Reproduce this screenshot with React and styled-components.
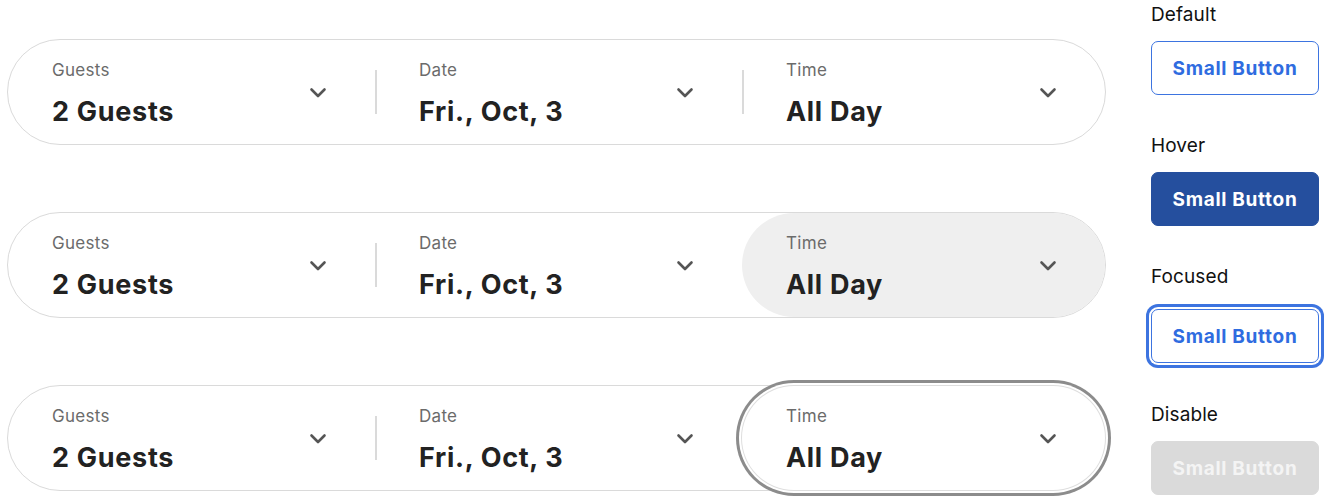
import React from 'react'
import styled, { createGlobalStyle, css } from 'styled-components'

const GlobalStyle = createGlobalStyle`
  html, body {
    margin: 0;
    padding: 0;
    background: #ffffff;
    font-family: Inter, "Noto Sans", sans-serif;
  }
`

const Page = styled.div`
  width: 1326px;
  height: 501px;
  overflow: hidden;
  box-sizing: border-box;
  padding: 0 7px;
  display: flex;
  align-items: flex-start;
  justify-content: space-between;
`

const Bars = styled.div`
  padding-top: 39px;
  display: flex;
  flex-direction: column;
  gap: 67px;
`

const Bar = styled.div`
  width: 1099px;
  height: 106px;
  box-sizing: border-box;
  border: 1.5px solid #dadada;
  border-radius: 53px;
  display: grid;
  grid-template-columns: 367px 367px 1fr;
  background: #fff;
`

const Segment = styled.div`
  position: relative;
  display: flex;
  align-items: center;
  justify-content: space-between;
  padding: 0 48px 0 44px;
  border-radius: 53px;
  ${p => p.$divider && css`
    &::before {
      content: '';
      position: absolute;
      left: 0;
      top: 50%;
      height: 44px;
      margin-top: -22px;
      width: 1.5px;
      background: #dadada;
    }
  `}
  ${p => p.$state === 'hover' && css`
    background: #efefef;
    &::before { display: none; }
  `}
  ${p => p.$state === 'focus' && css`
    background: #fff;
    box-shadow: 0 0 0 1px #dedede, 0 0 0 3px #fff, 0 0 0 6px #8c8c8c;
    &::before { display: none; }
  `}
`

const Texts = styled.div`
  display: flex;
  flex-direction: column;
  gap: 16px;
  padding-top: 4px;
`

const Label = styled.div`
  font-size: 17px;
  line-height: 20px;
  letter-spacing: 0.3px;
  color: #6b6b6b;
`

const Value = styled.div`
  font-size: 27px;
  line-height: 32px;
  font-weight: 700;
  color: #222;
  letter-spacing: 0.7px;
`

const Chevron = () => (
  <svg width="18" height="11" viewBox="0 0 18 11" fill="none">
    <path d="M2.5 2.5l6.5 6.5 6.5-6.5" stroke="#555" strokeWidth="2.6" strokeLinecap="round" strokeLinejoin="round" />
  </svg>
)

const Side = styled.div`
  width: 168px;
  padding-top: 4px;
  display: flex;
  flex-direction: column;
  gap: 40px;
`

const Group = styled.div`
  display: flex;
  flex-direction: column;
  margin-bottom: ${p => p.$extra || 0}px;
`

const StateLabel = styled.div`
  font-size: 19px;
  line-height: 22px;
  letter-spacing: 0.1px;
  color: #111;
  margin-bottom: ${p => p.$gap || 15}px;
`

const Button = styled.button`
  width: 168px;
  height: 54px;
  box-sizing: border-box;
  border-radius: 7px;
  border: 1.5px solid #3d74e0;
  background: #fff;
  color: #2f6ce0;
  font-family: Inter, "Noto Sans", sans-serif;
  font-size: 19px;
  font-weight: 700;
  letter-spacing: 0.7px;
  cursor: pointer;
  ${p => p.$variant === 'hover' && css`
    background: #254f9e;
    border-color: #254f9e;
    color: #fff;
  `}
  ${p => p.$variant === 'focus' && css`
    box-shadow: 0 0 0 2px #fff, 0 0 0 5px #3d74e0;
  `}
  ${p => p.$variant === 'disabled' && css`
    background: #dadada;
    border-color: #dadada;
    color: #f4f4f4;
    cursor: default;
  `}
`

const fields = [
  { label: 'Guests', value: '2 Guests' },
  { label: 'Date', value: 'Fri., Oct, 3' },
  { label: 'Time', value: 'All Day' },
]

function SearchBar({ state }) {
  return (
    <Bar>
      {fields.map((f, i) => (
        <Segment key={f.label} $divider={i > 0} $state={i === 2 ? state : undefined}>
          <Texts>
            <Label>{f.label}</Label>
            <Value>{f.value}</Value>
          </Texts>
          <Chevron />
        </Segment>
      ))}
    </Bar>
  )
}

export default function App() {
  return (
    <Page>
      <GlobalStyle />
      <Bars>
        <SearchBar />
        <SearchBar state="hover" />
        <SearchBar state="focus" />
      </Bars>
      <Side>
        <Group>
          <StateLabel>Default</StateLabel>
          <Button>Small Button</Button>
        </Group>
        <Group>
          <StateLabel>Hover</StateLabel>
          <Button $variant="hover">Small Button</Button>
        </Group>
        <Group $extra={1}>
          <StateLabel $gap={21}>Focused</StateLabel>
          <Button $variant="focus">Small Button</Button>
        </Group>
        <Group>
          <StateLabel>Disable</StateLabel>
          <Button $variant="disabled" disabled>Small Button</Button>
        </Group>
      </Side>
    </Page>
  )
}
